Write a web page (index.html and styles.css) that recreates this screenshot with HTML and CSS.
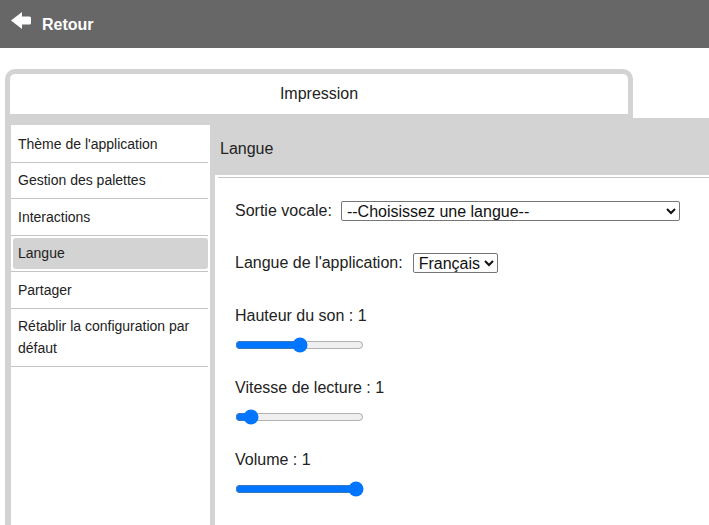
FILE: index.html
```html
<!DOCTYPE html>
<html lang="fr">
<head>
<meta charset="utf-8">
<title>Paramètres</title>
<link rel="stylesheet" href="styles.css">
</head>
<body>
<header class="topbar">
  <svg class="back-icon" viewBox="0 0 20 18" width="20" height="18" aria-hidden="true">
    <polygon points="0,8.5 11,0 11,17" fill="#fff"/>
    <rect x="9" y="4.5" width="11" height="8" rx="1.5" fill="#fff"/>
  </svg>
  <span class="back-label">Retour</span>
</header>

<main class="settings">
  <div class="tab">Impression</div>
  <div class="panel">
    <nav class="menu">
      <div class="item"><span class="link">Thème de l'application</span></div>
      <div class="item"><span class="link">Gestion des palettes</span></div>
      <div class="item"><span class="link">Interactions</span></div>
      <div class="item active"><span class="link">Langue</span></div>
      <div class="item"><span class="link">Partager</span></div>
      <div class="item"><span class="link">Rétablir la configuration par défaut</span></div>
    </nav>
    <section class="content">
      <div class="content-title">Langue</div>
      <div class="content-body">
        <div class="inner">
          <div class="row row-first">
            <label class="label" for="voice">Sortie vocale:</label>
            <select id="voice" class="select select-wide">
              <option>--Choisissez une langue--</option>
            </select>
          </div>
          <div class="row row-second">
            <label class="label" for="lang">Langue de l'application:</label>
            <select id="lang" class="select">
              <option>Français</option>
            </select>
          </div>
          <div class="group">
            <div class="slider-label">Hauteur du son : 1</div>
            <input class="slider" type="range" min="0" max="2" step="0.1" value="1">
          </div>
          <div class="group">
            <div class="slider-label">Vitesse de lecture : 1</div>
            <input class="slider" type="range" min="0.1" max="12.4" step="0.1" value="1">
          </div>
          <div class="group">
            <div class="slider-label">Volume : 1</div>
            <input class="slider" type="range" min="0" max="1" step="0.1" value="1">
          </div>
        </div>
      </div>
    </section>
  </div>
</main>
</body>
</html>
```
FILE: styles.css
```css
* {
  box-sizing: border-box;
}

html, body {
  margin: 0;
  padding: 0;
  background: #fff;
  overflow: hidden;
}

body {
  font-family: "Liberation Sans", Arial, sans-serif;
  color: #222;
}

.topbar {
  height: 48px;
  background: #676767;
  display: flex;
  align-items: center;
  padding-left: 11px;
  gap: 11px;
}

.back-icon {
  display: block;
  margin-top: -6px;
}

.back-label {
  color: #fff;
  font-weight: bold;
  font-size: 16px;
  line-height: 20px;
  margin-top: 2px;
}

.settings {
  padding-top: 21px;
  margin-left: 5px;
}

.tab {
  width: 628px;
  height: 49px;
  border: 5px solid #d3d3d3;
  border-bottom-width: 4px;
  border-radius: 10px 10px 0 0;
  background: #fff;
  text-align: center;
  font-size: 16px;
  line-height: 40px;
  color: #222;
}

.panel {
  background: #d3d3d3;
  display: flex;
  align-items: stretch;
  padding-left: 6px;
  height: 407px;
}

.menu {
  width: 199px;
  flex: none;
  background: #fff;
  margin-top: 7px;
  padding-top: 1px;
}

.item {
  border-bottom: 1px solid #c4c4c4;
  margin-right: 2px;
  font-size: 14px;
}

.link {
  display: block;
  padding: 6.75px 7px;
  line-height: 22px;
}

.item.active .link {
  background: #d3d3d3;
  border-radius: 3px;
  margin: 2px 0 2px 2px;
  padding: 4.75px 5px;
}

.content {
  flex: 1;
  margin-left: 5px;
  display: flex;
  flex-direction: column;
}

.content-title {
  height: 57px;
  flex: none;
  padding: 20px 0 0 5px;
  font-size: 16px;
  line-height: 22px;
}

.content-body {
  flex: 1;
  background: #fff;
  padding: 2px 0 0 3px;
}

.inner {
  border-top: 1px solid #c8c8c8;
  padding: 22px 18px 0 17px;
  font-size: 16px;
}

.row {
  display: flex;
  align-items: center;
  height: 22px;
}

.row-first .label {
  margin-right: 9px;
}

.row-second {
  margin-top: 30px;
}

.row-second .label {
  margin-right: 10px;
}

.label {
  line-height: 22px;
}

.select {
  font-family: "Liberation Sans", Arial, sans-serif;
  font-size: 16px;
  height: 20px;
  padding: 0 0 0 1px;
  border: 1px solid #767676;
  border-radius: 2px;
  background: #fff;
  color: #111;
}

.select-wide {
  width: 339px;
}

.group {
  display: flex;
  flex-direction: column;
  align-items: flex-start;
}

.row-second + .group {
  margin-top: 31px;
}

.group + .group {
  margin-top: 24px;
}

.slider-label {
  line-height: 22px;
}

.slider {
  display: block;
  width: 129px;
  height: 16px;
  margin: 10px 0 0 0;
}
```
